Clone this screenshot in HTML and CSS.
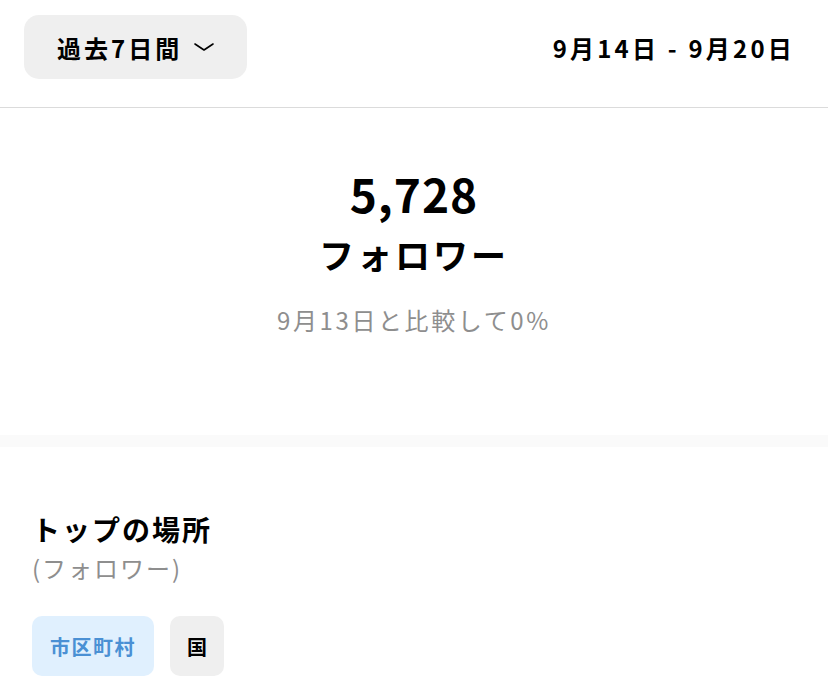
FILE: index.html
```html
<!DOCTYPE html>
<html lang="ja">
<head>
<meta charset="utf-8">
<link rel="stylesheet" href="styles.css">
</head>
<body>
<header class="topbar">
  <button class="range-btn">過去7日間
    <svg class="chev" width="20" height="8" viewBox="0 0 20 8"><path d="M1 1 L10 7 L19 1" fill="none" stroke="#000" stroke-width="1.6" stroke-linecap="round" stroke-linejoin="round"/></svg>
  </button>
  <div class="date-range">9月14日 - 9月20日</div>
</header>
<section class="stats">
  <div class="big-num">5,728</div>
  <div class="big-label">フォロワー</div>
  <div class="compare">9月13日と比較して0%</div>
</section>
<section class="places">
  <h2 class="places-title">トップの場所</h2>
  <div class="places-sub">(フォロワー)</div>
  <div class="chips">
    <span class="chip chip-active">市区町村</span>
    <span class="chip">国</span>
  </div>
</section>
</body>
</html>
```
FILE: styles.css
```css
html, body {
  margin: 0;
  padding: 0;
  background: #fff;
  font-family: "Noto Sans CJK JP", "Noto Sans", sans-serif;
  color: #000;
}
.topbar {
  display: flex;
  justify-content: space-between;
  align-items: center;
  padding: 15px 33px 28px 24px;
  border-bottom: 1px solid #dbdbdb;
}
.range-btn {
  display: flex;
  align-items: center;
  gap: 12px;
  height: 64px;
  width: 223px;
  padding: 0 0 0 33px;
  border: none;
  border-radius: 15px;
  background: #efefef;
  font-family: inherit;
  font-size: 24px;
  font-weight: 700;
  letter-spacing: 3px;
  color: #000;
}
.chev { display: block; }
.date-range {
  font-size: 24px;
  font-weight: 700;
  letter-spacing: 3.2px;
}
.stats {
  display: flex;
  flex-direction: column;
  align-items: center;
  padding: 56px 0 98px;
  border-bottom: 12px solid #fafafa;
}
.big-num {
  font-size: 46px;
  font-weight: 700;
  line-height: 58px;
  letter-spacing: 1px;
}
.big-label {
  font-size: 35px;
  font-weight: 700;
  line-height: 50px;
  letter-spacing: 3px;
  margin-top: 7px;
}
.compare {
  font-size: 24px;
  line-height: 34px;
  color: #8e8e8e;
  letter-spacing: 2.6px;
  margin-top: 24px;
}
.places {
  padding: 62px 32px 0;
}
.places-title {
  margin: 0;
  font-size: 28px;
  font-weight: 700;
  line-height: 40px;
  letter-spacing: 2px;
}
.places-sub {
  font-size: 24px;
  line-height: 34px;
  color: #8e8e8e;
  letter-spacing: 2px;
  margin-top: 2px;
}
.chips {
  display: flex;
  gap: 16px;
  margin-top: 31px;
}
.chip {
  display: flex;
  align-items: center;
  justify-content: center;
  height: 60px;
  padding: 0 17px;
  border-radius: 10px;
  background: #efefef;
  font-size: 20px;
  font-weight: 700;
  color: #000;
}
.chip-active {
  padding: 0 18px;
  background: #e0f0fe;
  color: #4a90d4;
  letter-spacing: 1.5px;
}
```
